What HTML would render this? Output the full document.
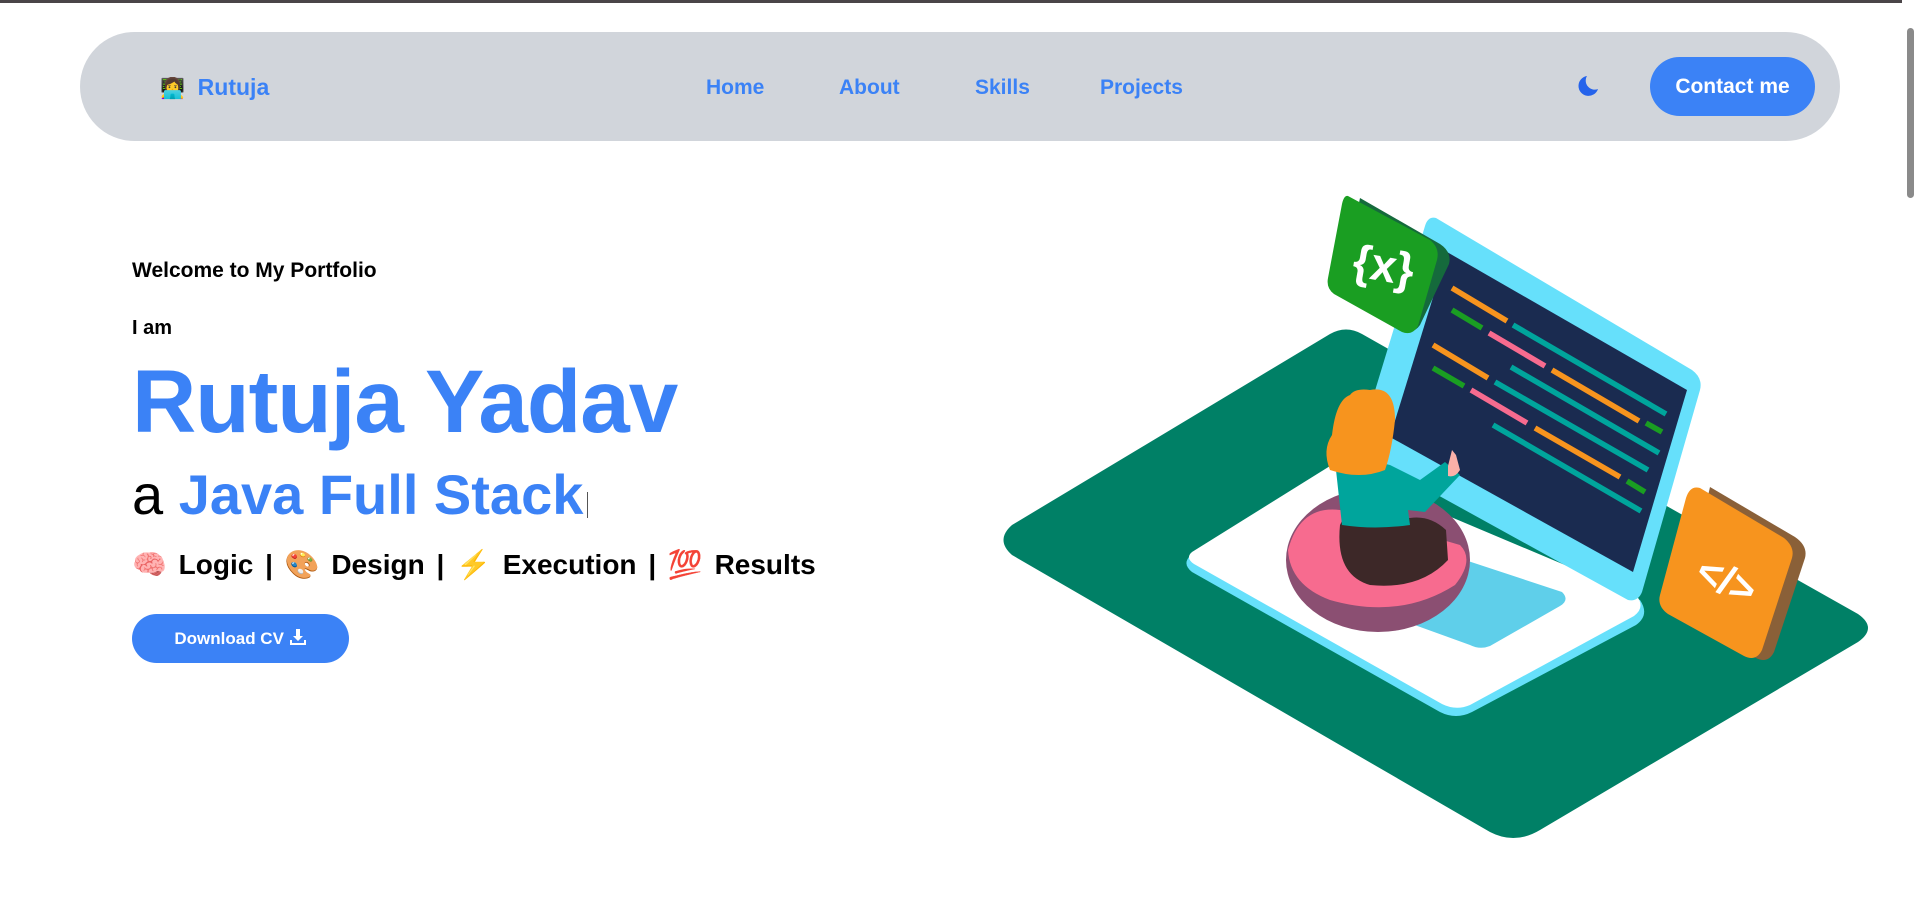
<!DOCTYPE html>
<html><head><meta charset="utf-8"><style>
html,body{margin:0;padding:0;width:1918px;height:907px;overflow:hidden;background:#fff;font-family:"Liberation Sans","Noto Sans CJK JP",sans-serif;}
.top{position:absolute;left:0;top:0;width:1918px;height:3px;background:#4a4548}
.nav{position:absolute;left:80px;top:32px;width:1760px;height:109px;background:#d1d5db;border-radius:55px}
.logo{position:absolute;left:160px;top:74px;font-size:23px;font-weight:bold;color:#3b82f6}
.link{position:absolute;top:76px;font-size:21px;font-weight:bold;color:#3b82f6}
.btn{position:absolute;left:1650px;top:57px;width:165px;height:59px;border-radius:30px;background:#3b82f6;color:#fff;font-size:21px;font-weight:bold;text-align:center;line-height:59px}
.t{position:absolute;left:132px;color:#000;font-weight:bold;white-space:nowrap}
.sb{position:absolute;right:0;top:0;width:16px;height:907px;background:#fff}
</style></head><body>
<div class="top"></div>
<div class="nav"></div>
<div class="logo"><span style="font-size:20px">👩‍💻</span>&nbsp; Rutuja</div>
<div class="link" style="left:706px">Home</div>
<div class="link" style="left:839px">About</div>
<div class="link" style="left:975px">Skills</div>
<div class="link" style="left:1100px">Projects</div>
<svg style="position:absolute;left:1574px;top:74px" width="26" height="26" viewBox="0 0 26 26"><path d="M13 2a10 10 0 1 0 11 13A9 9 0 0 1 13 2z" fill="#2563eb"/></svg>
<div class="btn">Contact me</div>

<div class="t" style="top:259px;font-size:21px">Welcome to My Portfolio</div>
<div class="t" style="top:317px;font-size:20px">I am</div>
<div class="t" style="top:350px;font-size:89px;color:#3b82f6;letter-spacing:-1px">Rutuja Yadav</div>
<div class="t" style="top:462px;font-size:56px;font-weight:normal">a <b style="color:#3b82f6">Java Full Stack</b><span style="display:inline-block;width:1px;height:26px;background:#555;vertical-align:-4px;margin-left:4px"></span></div>
<div class="t" style="top:548px;font-size:28px;word-spacing:4px">🧠 Logic | 🎨 Design | ⚡ Execution | 💯 Results</div>
<div style="position:absolute;left:132px;top:614px;width:217px;height:49px;border-radius:25px;background:#3b82f6;color:#fff;font-weight:bold;font-size:17px;line-height:49px;text-align:center">Download CV <svg width="18" height="18" viewBox="0 0 18 18" style="vertical-align:-2px"><path d="M7 1h4v7h3l-5 5-5-5h3z" fill="#fff"/><path d="M1 12v5h16v-5h-2v3H3v-3z" fill="#fff"/></svg></div>

<svg style="position:absolute;left:0;top:0" width="1918" height="907" viewBox="0 0 1918 907">
<path d="M1012 525 L1330 334 Q1346 325 1362 334 L1858 614 Q1878 628 1858 642 L1540 830 Q1515 845 1490 832 L1012 555 Q995 540 1012 525Z" fill="#008066"/>
<path d="M1190 556 L1330 470 L1640 600 Q1650 615 1636 625 L1472 712 Q1456 720 1440 712 L1192 572 Q1182 564 1190 556Z" fill="#66e0fb"/>
<path d="M1192 552 L1330 466 L1636 595 Q1646 607 1634 616 L1470 705 Q1456 711 1442 704 L1194 564 Q1185 558 1192 552Z" fill="#fff"/>
<path d="M1296 582 L1380 532 L1562 592 Q1570 600 1560 606 L1490 646 Q1480 650 1470 645 Z" fill="#5fcfea"/>
<path d="M1436 218 L1692 370 Q1703 378 1700 390 L1642 592 Q1638 602 1628 600 L1385 466 L1357 450 L1425 226 Q1428 216 1436 218Z" fill="#66e0fb"/>
<path d="M1447 252 L1687 390 L1633 572 L1390 437 Z" fill="#1a2b50"/>
<g stroke-width="5.5" stroke-linecap="butt">
<line x1="1452" y1="288" x2="1507" y2="321" stroke="#f7941e"/>
<line x1="1452" y1="310" x2="1482" y2="328" stroke="#1a9e22"/>
<line x1="1489" y1="333" x2="1545" y2="366" stroke="#f76b8f"/>
<line x1="1513" y1="325" x2="1666" y2="414" stroke="#00a59c"/>
<line x1="1433" y1="345" x2="1488" y2="378" stroke="#f7941e"/>
<line x1="1433" y1="368" x2="1464" y2="386" stroke="#1a9e22"/>
<line x1="1511" y1="367" x2="1659" y2="453" stroke="#00a59c"/>
<line x1="1552" y1="370" x2="1639" y2="421" stroke="#f7941e"/>
<line x1="1646" y1="423" x2="1662" y2="432" stroke="#1a9e22"/>
<line x1="1471" y1="390" x2="1527" y2="423" stroke="#f76b8f"/>
<line x1="1495" y1="382" x2="1648" y2="470" stroke="#00a59c"/>
<line x1="1493" y1="425" x2="1641" y2="511" stroke="#00a59c"/>
<line x1="1535" y1="428" x2="1620" y2="477" stroke="#f7941e"/>
<line x1="1627" y1="481" x2="1645" y2="492" stroke="#1a9e22"/>
</g>
<path d="M1360 198 L1440 244 Q1452 252 1449 264 L1420 325 Q1414 334 1404 330 L1340 296 Z" fill="#156a3c"/>
<path d="M1348 196 L1430 240 Q1440 248 1437 260 L1418 326 Q1412 336 1402 332 L1334 294 Q1326 288 1328 278 L1342 204 Q1344 195 1348 196Z" fill="#1a9e22"/>
<text x="1383" y="281" font-family="Liberation Sans,sans-serif" font-weight="bold" font-size="46" fill="#fff" transform="rotate(10 1383 270)" text-anchor="middle">{x}</text>
<path d="M1710 487 L1795 537 Q1808 546 1805 558 L1774 652 Q1768 664 1756 658 L1680 618 Z" fill="#8a6038"/>
<path d="M1700 488 L1784 538 Q1795 547 1792 558 L1762 650 Q1756 662 1744 656 L1668 614 Q1657 606 1660 595 L1686 498 Q1690 485 1700 488Z" fill="#f7941e"/>
<text x="1727" y="595" font-family="Liberation Sans,sans-serif" font-weight="bold" font-size="42" fill="#fff" transform="rotate(25 1727 580)" text-anchor="middle">&lt;/&gt;</text>
<ellipse cx="1378" cy="560" rx="92" ry="72" fill="#8b4f72"/>
<path d="M1288 550 Q1300 505 1340 510 L1460 545 Q1475 560 1455 585 Q1400 620 1330 600 Q1290 585 1288 550Z" fill="#f76b8f"/>
<path d="M1340 525 Q1335 575 1370 585 Q1420 590 1448 560 L1446 530 Q1430 515 1410 518 L1345 515Z" fill="#3d2828"/>
<path d="M1336 470 Q1350 455 1390 465 L1420 480 L1445 462 L1460 475 L1425 512 L1408 510 L1410 525 Q1375 530 1342 525Z" fill="#00a59c"/>
<path d="M1448 466 L1452 450 L1456 455 L1460 470 Q1455 478 1448 476Z" fill="#fbb0a8"/>
<path d="M1370 390 Q1395 385 1395 420 Q1392 450 1385 470 Q1360 480 1330 470 Q1322 450 1332 435 Q1336 400 1350 395 Q1355 388 1370 390Z" fill="#f7941e"/>
</svg>
<div class="sb"><div style="position:absolute;left:5px;top:28px;width:7px;height:170px;border-radius:4px;background:#8a8a8a"></div></div>
</body></html>
